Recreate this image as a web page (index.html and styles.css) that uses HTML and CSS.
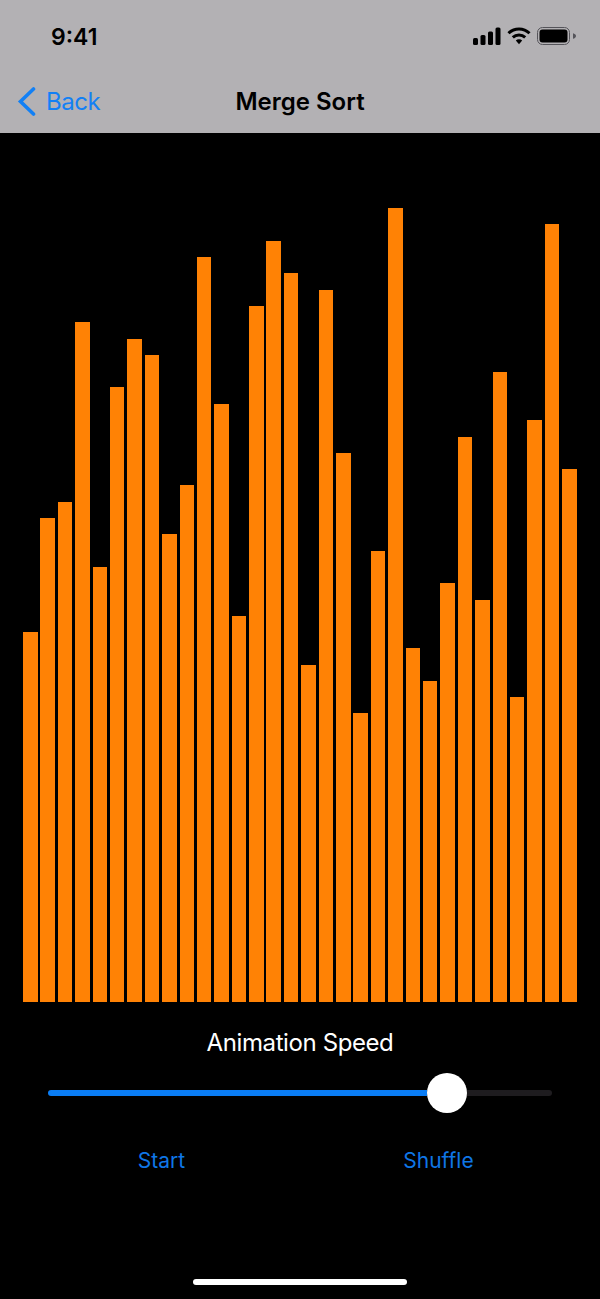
FILE: index.html
```html
<!DOCTYPE html>
<html lang="en">
<head>
    <meta charset="UTF-8">
    <title>Merge Sort</title>
    <link rel="stylesheet" href="styles.css">
</head>
<body>
<div id="phone">
    <div id="header">
        <div id="status_bar">
            <span id="clock">9:41</span>
            <div id="status_icons">
                <svg width="28" height="18" viewBox="0 0 28 18">
                    <rect x="0" y="11" width="5" height="7" rx="1.5"/>
                    <rect x="7.5" y="8" width="5" height="10" rx="1.5"/>
                    <rect x="15" y="4.5" width="5" height="13.5" rx="1.5"/>
                    <rect x="22.5" y="0.5" width="5" height="17.5" rx="1.5"/>
                </svg>
                <svg width="24" height="18" viewBox="0 0 24 18">
                    <path d="M1.5 6.2 A15 15 0 0 1 22.5 6.2" fill="none" stroke="#000" stroke-width="3"/>
                    <path d="M5.8 10.4 A9 9 0 0 1 18.2 10.4" fill="none" stroke="#000" stroke-width="3"/>
                    <path d="M8.8 13.6 A4.6 4.6 0 0 1 15.2 13.6 L12 17.2 Z"/>
                </svg>
                <svg width="40" height="18" viewBox="0 0 40 18">
                    <rect x="0.5" y="0.5" width="32" height="17" rx="5" fill="none" stroke="#55545a" stroke-width="1"/>
                    <rect x="2.5" y="2.5" width="28" height="13" rx="3"/>
                    <path d="M36 6.2 C37.5 6.6 39 7.6 39 9 C39 10.4 37.5 11.4 36 11.8 Z" fill="#55545a"/>
                </svg>
            </div>
        </div>
        <div id="nav_bar">
            <a id="back" href="#">
                <svg width="20" height="30" viewBox="0 0 20 30">
                    <path d="M16.5 3 L3.5 15.5 L16.5 28" fill="none" stroke="#1280f5" stroke-width="3.6" stroke-linecap="round"/>
                </svg>
                <span>Back</span>
            </a>
            <h1>Merge Sort</h1>
        </div>
    </div>
    <div id="bars">
        <div class="bar" style="height:370px"></div>
        <div class="bar" style="height:484px"></div>
        <div class="bar" style="height:500px"></div>
        <div class="bar" style="height:680px"></div>
        <div class="bar" style="height:435px"></div>
        <div class="bar" style="height:615px"></div>
        <div class="bar" style="height:663px"></div>
        <div class="bar" style="height:647px"></div>
        <div class="bar" style="height:468px"></div>
        <div class="bar" style="height:517px"></div>
        <div class="bar" style="height:745px"></div>
        <div class="bar" style="height:598px"></div>
        <div class="bar" style="height:386px"></div>
        <div class="bar" style="height:696px"></div>
        <div class="bar" style="height:761px"></div>
        <div class="bar" style="height:729px"></div>
        <div class="bar" style="height:337px"></div>
        <div class="bar" style="height:712px"></div>
        <div class="bar" style="height:549px"></div>
        <div class="bar" style="height:289px"></div>
        <div class="bar" style="height:451px"></div>
        <div class="bar" style="height:794px"></div>
        <div class="bar" style="height:354px"></div>
        <div class="bar" style="height:321px"></div>
        <div class="bar" style="height:419px"></div>
        <div class="bar" style="height:565px"></div>
        <div class="bar" style="height:402px"></div>
        <div class="bar" style="height:630px"></div>
        <div class="bar" style="height:305px"></div>
        <div class="bar" style="height:582px"></div>
        <div class="bar" style="height:778px"></div>
        <div class="bar" style="height:533px"></div>
    </div>
    <div id="speed_label">Animation Speed</div>
    <div id="slider">
        <div id="slider_fill"></div>
        <div id="slider_thumb"></div>
        <div id="slider_rest"></div>
    </div>
    <div id="buttons">
        <a href="#">Start</a>
        <a href="#">Shuffle</a>
    </div>
    <div id="home_bar"></div>
</div>
</body>
</html>
```

FILE: styles.css
```css
*{
    margin: 0;
    padding: 0;
    border: none;
    box-sizing: border-box;
}
body{
    background-color: #000;
    font-family: Inter, "Noto Sans", sans-serif;
}
a{
    text-decoration: none;
}
#phone{
    width: 600px;
    height: 1299px;
    display: flex;
    flex-direction: column;
    overflow: hidden;
}
#header{
    height: 133px;
    background-color: #b3b1b4;
}
#status_bar{
    height: 71px;
    padding: 0 23px 0 51px;
    display: flex;
    justify-content: space-between;
    align-items: center;
}
#clock{
    padding-top: 2px;
    font-size: 23px;
    font-weight: 600;
    color: #000;
}
#status_icons{
    display: flex;
    align-items: center;
    gap: 6px;
}
#nav_bar{
    height: 62px;
    padding-bottom: 2px;
    display: flex;
    align-items: center;
    justify-content: center;
    position: relative;
}
#nav_bar h1{
    font-size: 24px;
    font-weight: 600;
    color: #000;
}
#back{
    position: absolute;
    left: 17px;
    top: 15px;
    display: flex;
    align-items: center;
    gap: 9px;
    font-size: 24px;
    letter-spacing: -0.5px;
    color: #1280f5;
}
#bars{
    height: 869px;
    padding: 0 23px;
    display: flex;
    justify-content: space-between;
    align-items: flex-end;
}
.bar{
    width: 14.5px;
    background-color: #ff8205;
}
#speed_label{
    margin-top: 26px;
    height: 29px;
    line-height: 29px;
    text-align: center;
    font-size: 24px;
    letter-spacing: -0.4px;
    color: #fff;
}
#slider{
    margin-top: 16px;
    padding: 0 48px;
    height: 40px;
    display: flex;
    align-items: center;
}
#slider_fill{
    width: 379px;
    height: 6px;
    background-color: #0a7df5;
    border-radius: 3px 0 0 3px;
}
#slider_thumb{
    width: 40px;
    height: 40px;
    background-color: #fff;
    border-radius: 50%;
}
#slider_rest{
    flex: 1;
    height: 6px;
    background-color: #1e1c1f;
    border-radius: 0 3px 3px 0;
}
#buttons{
    margin-top: 35px;
    padding: 0 23px;
    display: grid;
    grid-template-columns: 1fr 1fr;
    text-align: center;
    font-size: 21px;
    line-height: 26px;
}
#buttons a{
    color: #0f76e6;
}
#home_bar{
    width: 214px;
    height: 6px;
    margin: 105px auto 0;
    background-color: #fff;
    border-radius: 3px;
}
```
